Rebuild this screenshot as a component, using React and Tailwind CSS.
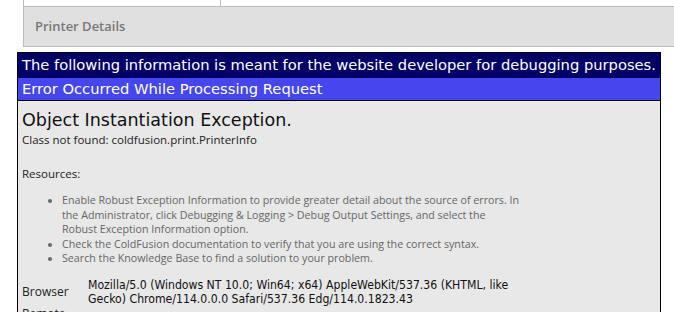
export default function App() {
  return (
    <div className="w-[674px] h-[312px] overflow-hidden bg-white">
      <div className="ml-[23px]">
        <div className="flex h-[6px] border-l border-[#bdbdbd]">
          <div className="w-[197px] border-r border-[#bdbdbd]" />
        </div>
        <div className="h-[41px] flex items-center pl-[11px] border-l border-t border-b border-[#bdbdbd] bg-[#e0e0e0]">
          <span className="font-['Open_Sans',sans-serif] text-[13px] font-semibold text-[#777]">
            Printer Details
          </span>
        </div>
      </div>

      <div className="ml-[17px] mt-[5px] w-[644px] border border-black bg-[#e8e8e8] font-['DejaVu_Sans',sans-serif]">
        <div className="h-[25px] bg-[#000066] px-[4px] flex items-center text-white text-[14.7px] whitespace-nowrap">
          The following information is meant for the website developer for debugging purposes.
        </div>
        <div className="h-[23px] bg-[#4646EE] px-[4px] flex items-center text-white text-[14.7px] border-b border-black">
          Error Occurred While Processing Request
        </div>
        <div className="px-[4px] pt-[8px]">
          <div className="text-[17.5px] text-[#111] leading-[22px]">Object Instantiation Exception.</div>
          <div className="font-['Open_Sans',sans-serif] text-[11.5px] text-[#222] leading-[15px] mt-[1px]">
            Class not found: coldfusion.print.PrinterInfo
          </div>
          <div className="font-['Open_Sans',sans-serif] text-[11.5px] text-[#222] leading-[15px] mt-[19px]">
            Resources:
          </div>
          <ul className="font-['Open_Sans',sans-serif] text-[10.7px] text-[#666] leading-[14.6px] mt-[12px] ml-[40px] list-disc w-[458px]">
            <li>
              Enable Robust Exception Information to provide greater detail about the source of errors. In the
              Administrator, click Debugging &amp; Logging &gt; Debug Output Settings, and select the Robust
              Exception Information option.
            </li>
            <li>Check the ColdFusion documentation to verify that you are using the correct syntax.</li>
            <li>Search the Knowledge Base to find a solution to your problem.</li>
          </ul>
          <div className="flex items-center mt-[12px]">
            <div className="w-[66px] font-['Open_Sans',sans-serif] text-[12px] text-[#222]">Browser</div>
            <div className="w-[440px] text-[12.15px] [font-stretch:condensed] leading-[14.5px] text-[#111]">
              Mozilla/5.0 (Windows NT 10.0; Win64; x64) AppleWebKit/537.36 (KHTML, like Gecko)
              Chrome/114.0.0.0 Safari/537.36 Edg/114.0.1823.43
            </div>
          </div>
          <div className="font-['Open_Sans',sans-serif] text-[12px] text-[#222] leading-[14px]">Remote</div>
        </div>
      </div>
    </div>
  );
}
